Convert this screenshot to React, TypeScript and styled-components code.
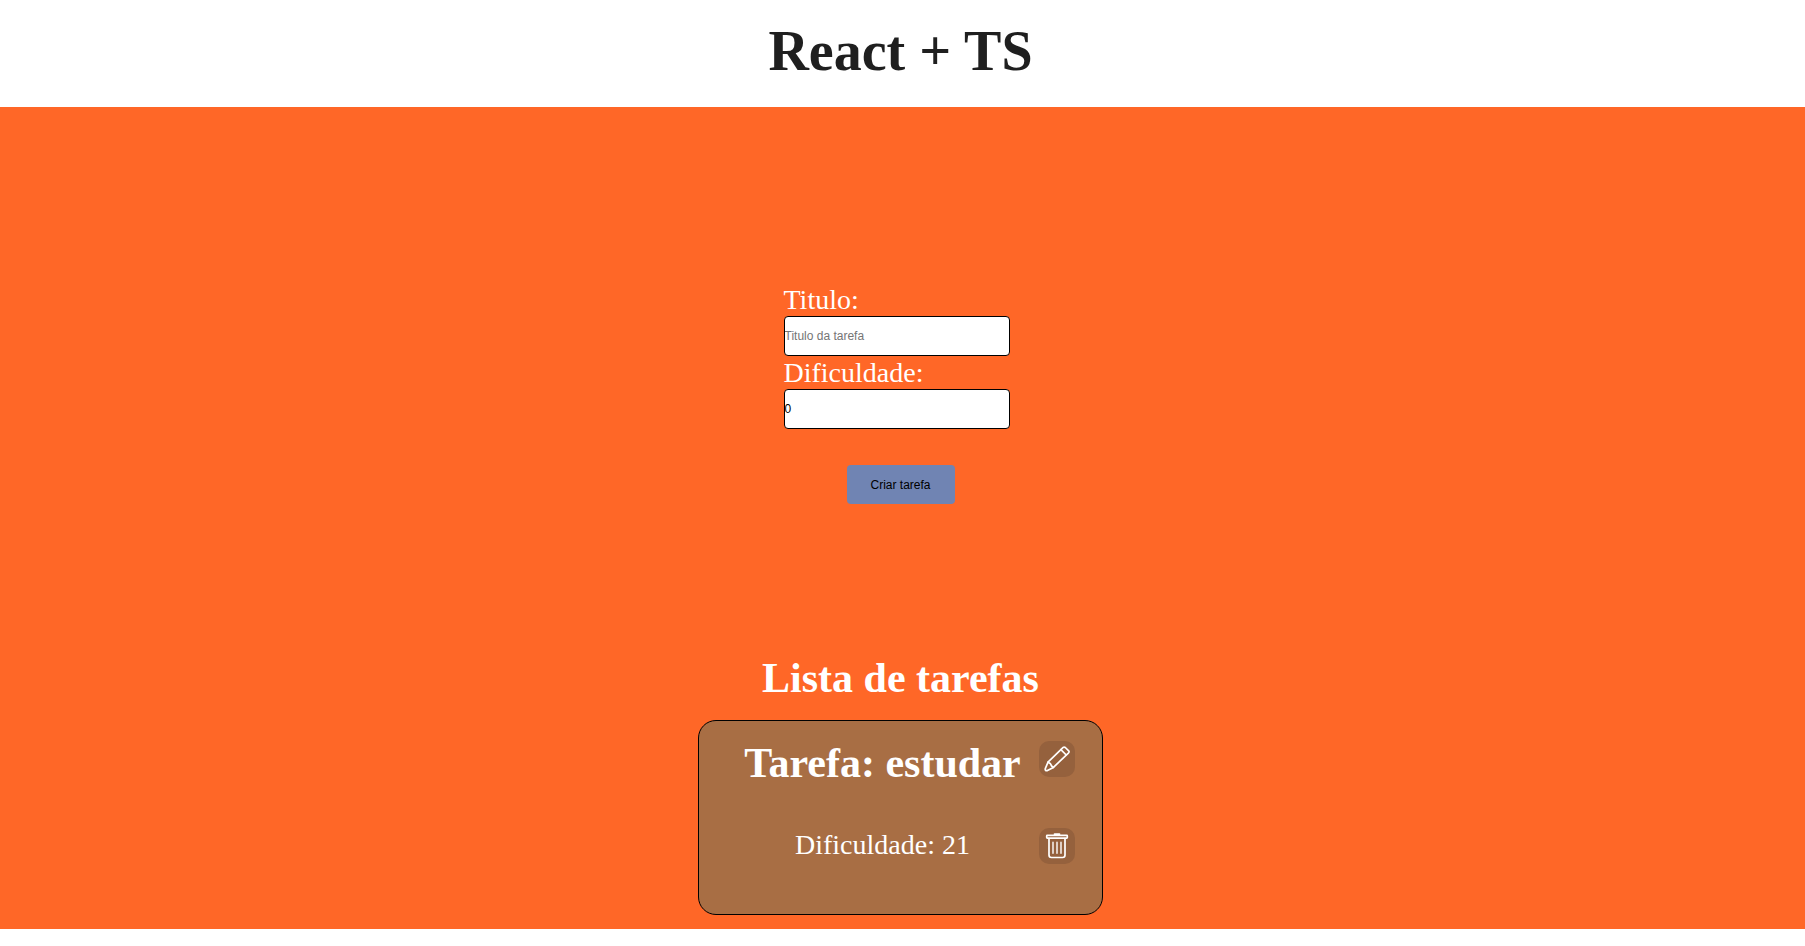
import React, { useState } from "react";
import styled, { createGlobalStyle } from "styled-components";

const GlobalStyle = createGlobalStyle`
  * { margin: 0; padding: 0; box-sizing: border-box; }
  body { background: #fff; font-family: "Liberation Serif", "Times New Roman", serif; }
`;

const Header = styled.header`
  padding: 19px 4px 24px 0;
  text-align: center;
  color: #1f1f1f;
`;

const PageTitle = styled.h1`
  font-size: 56px;
  line-height: 64px;
`;

const Main = styled.main`
  display: flex;
  flex-direction: column;
  align-items: center;
  padding: 176px 4px 14px 0;
  background: #ff6727;
  color: #fff;
`;

const Form = styled.form`
  display: flex;
  flex-direction: column;
  align-items: center;
  margin-bottom: 150px;
`;

const Field = styled.div`
  display: flex;
  flex-direction: column;
  width: 234px;
  padding-right: 8px;
`;

const Label = styled.label`
  font-size: 28px;
  line-height: 33px;
`;

const Input = styled.input`
  height: 40px;
  border: 1px solid #000;
  border-radius: 4px;
  background: #fff;
  color: #000;
  font-family: "Liberation Sans", Arial, sans-serif;
  font-size: 12px;

  &::placeholder { color: #757575; }
`;

const SubmitButton = styled.button`
  width: 108px;
  height: 39px;
  margin-top: 36px;
  border: none;
  border-radius: 4px;
  background: #7084b3;
  color: #000;
  font-family: "Liberation Sans", Arial, sans-serif;
  font-size: 12px;
  cursor: pointer;
`;

const ListTitle = styled.h2`
  margin-bottom: 18px;
  font-size: 42px;
  line-height: 48px;
`;

const Card = styled.article`
  display: flex;
  width: 405px;
  max-width: 100%;
  padding: 18px 27px 48px 27px;
  border: 1px solid #000;
  border-radius: 18px;
  background: #a86e44;
`;

const CardText = styled.div`
  display: flex;
  flex: 1;
  flex-direction: column;
  align-items: center;
  gap: 42px;
`;

const TaskTitle = styled.h3`
  font-size: 42px;
  line-height: 48px;
  white-space: nowrap;
`;

const TaskLevel = styled.p`
  font-size: 28px;
  line-height: 32px;
`;

const Actions = styled.div`
  display: flex;
  flex-direction: column;
  gap: 51px;
  padding: 2px 0;
`;

const IconButton = styled.button`
  display: flex;
  align-items: center;
  justify-content: center;
  width: 36px;
  height: 36px;
  border: none;
  border-radius: 10px;
  background: #95613d;
  color: #fff;
  cursor: pointer;
`;

const Icon = styled.svg`
  width: 26px;
  height: 26px;
  fill: none;
  stroke: currentColor;
  stroke-linecap: round;
  stroke-linejoin: round;
`;

const PencilIcon = () => (
  <Icon viewBox="0 0 26 26" strokeWidth="1.7" aria-hidden="true">
    <path d="M4 16.2 L19.2 1.4 Q20.2 .6 21.3 1.5 L24.7 4.8 Q25.5 5.8 24.6 6.8 L9.4 21.4 L3.4 24.6 Q.8 25.2 1.3 22.6 Z" />
    <path d="M16.9 3.7 L22.2 9 M4 16.2 L6.2 17.4 L7.6 20 L9.4 21.4" />
  </Icon>
);

const TrashIcon = () => (
  <Icon viewBox="0 0 26 26" strokeWidth="1.7" aria-hidden="true">
    <rect x="2.7" y="2.4" width="20.6" height="2.8" rx="0.6" />
    <path d="M10.6 1.3 H15.4" strokeWidth="2" />
    <path d="M5 5.5 V22.1 Q5 24.5 7.4 24.5 H18.6 Q21 24.5 21 22.1 V5.5" />
    <path d="M9 9.2 V20.2 M13 9.2 V20.2 M17 9.2 V20.2" strokeWidth="1.4" />
  </Icon>
);

export default function App() {
  const [title, setTitle] = useState("");
  const [level, setLevel] = useState("0");

  return (
    <>
      <GlobalStyle />
      <Header>
        <PageTitle>React + TS</PageTitle>
      </Header>
      <Main>
        <Form onSubmit={(event) => event.preventDefault()}>
          <Field>
            <Label htmlFor="title">Titulo:</Label>
            <Input
              id="title"
              type="text"
              placeholder="Titulo da tarefa"
              value={title}
              onChange={(event) => setTitle(event.target.value)}
            />
          </Field>
          <Field>
            <Label htmlFor="level">Dificuldade:</Label>
            <Input
              id="level"
              type="text"
              inputMode="numeric"
              value={level}
              onChange={(event) => setLevel(event.target.value)}
            />
          </Field>
          <SubmitButton type="submit">Criar tarefa</SubmitButton>
        </Form>
        <ListTitle>Lista de tarefas</ListTitle>
        <Card>
          <CardText>
            <TaskTitle>Tarefa: estudar</TaskTitle>
            <TaskLevel>Dificuldade: 21</TaskLevel>
          </CardText>
          <Actions>
            <IconButton type="button" aria-label="Editar tarefa">
              <PencilIcon />
            </IconButton>
            <IconButton type="button" aria-label="Excluir tarefa">
              <TrashIcon />
            </IconButton>
          </Actions>
        </Card>
      </Main>
    </>
  );
}
